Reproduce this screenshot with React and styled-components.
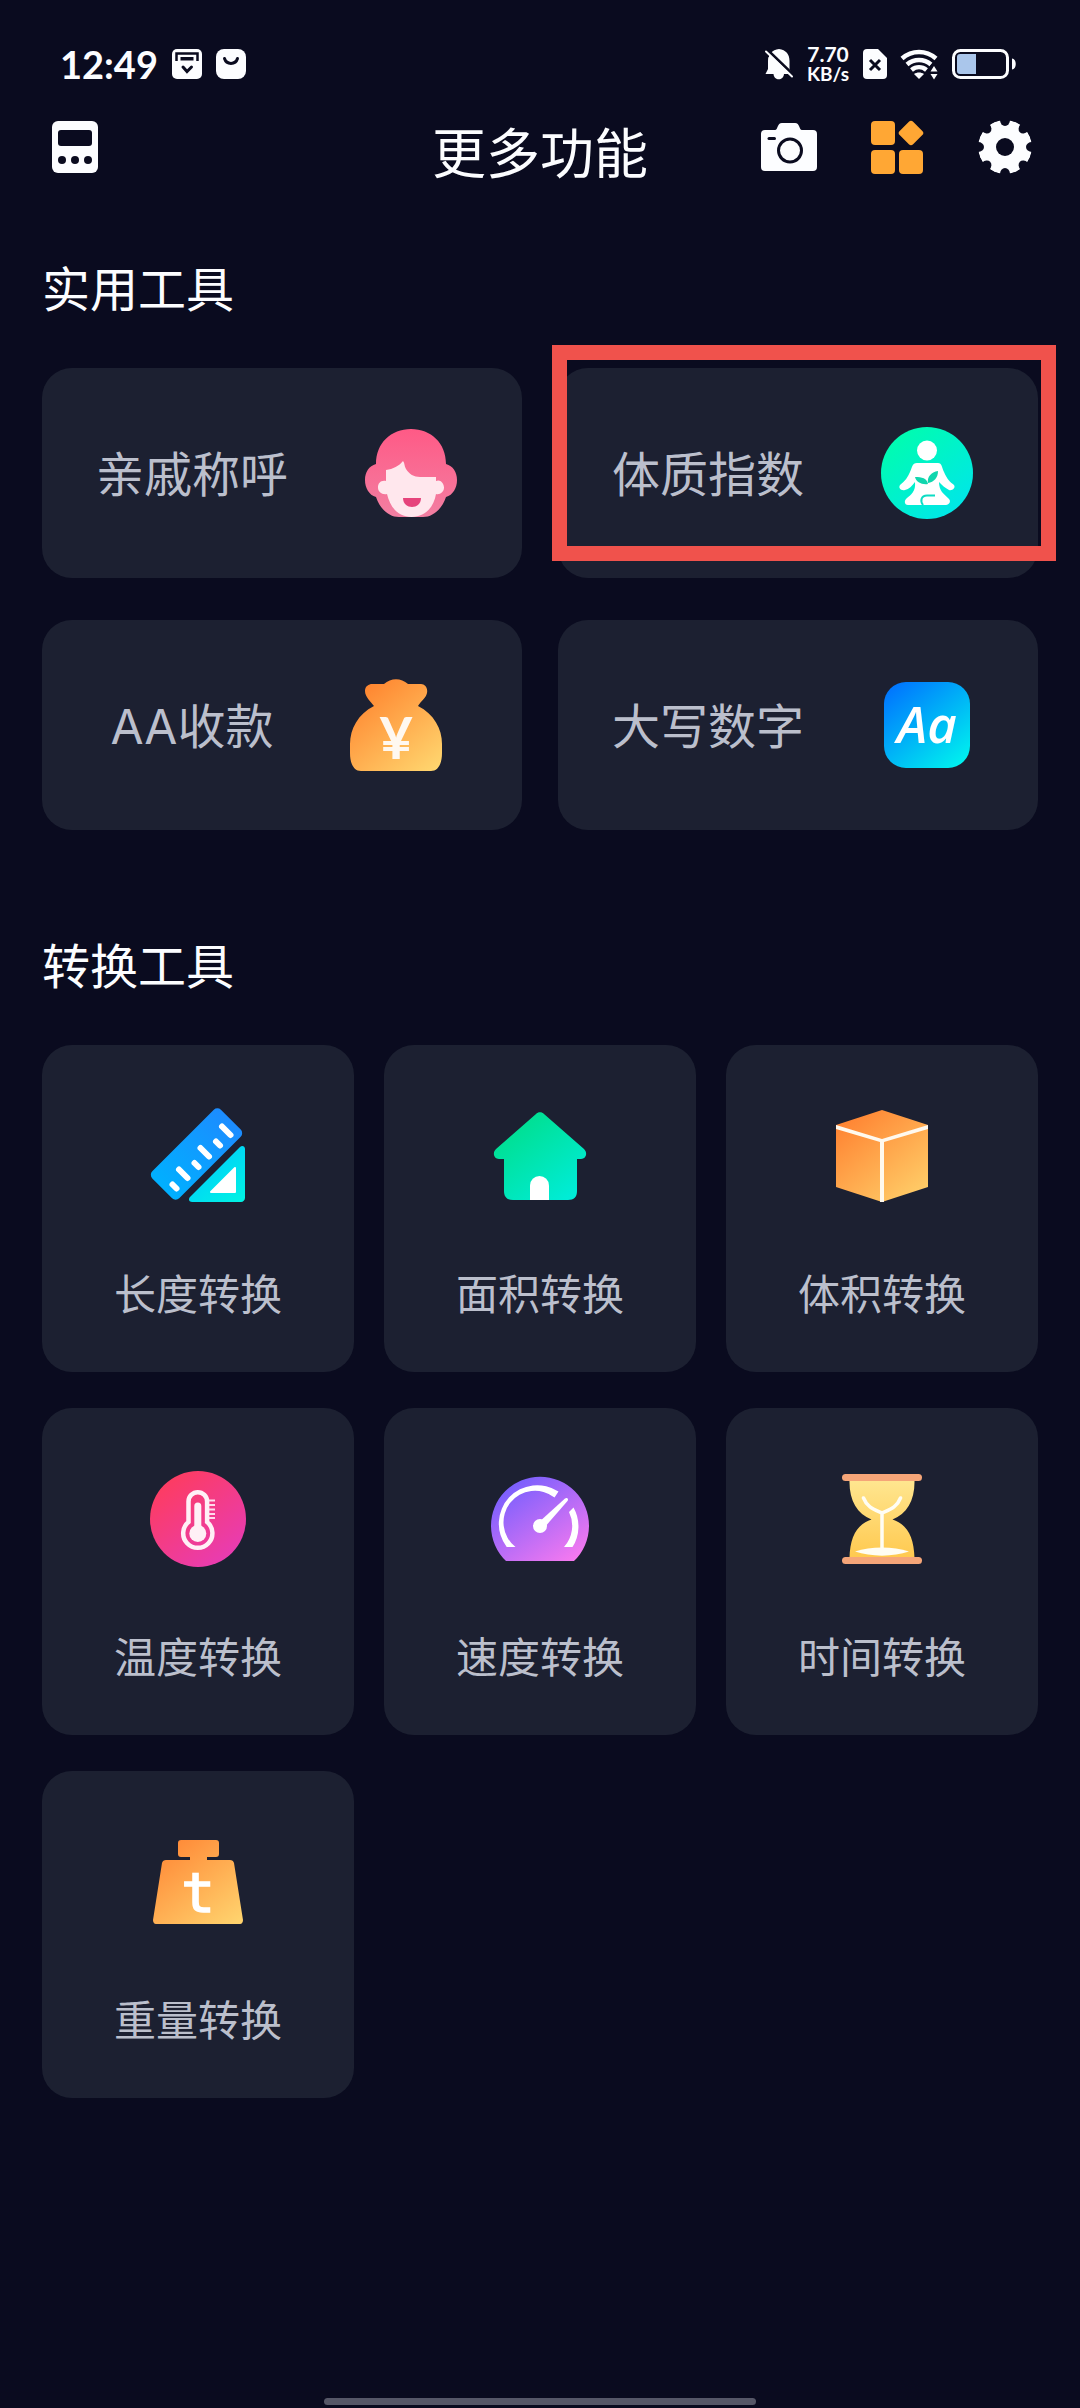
import React from "react";
import styled, { createGlobalStyle, css } from "styled-components";

const colors = {
  page: "#0a0b1f",
  card: "#1c2031",
  label: "#bbbfcc",
  white: "#fcfdff",
  orange: "#ffa734",
  frame: "#f0524c",
};

const GlobalStyle = createGlobalStyle`
  * {
    box-sizing: border-box;
  }

  body {
    margin: 0;
    background: ${colors.page};
    color: ${colors.white};
    font-family: Roboto, "Noto Sans CJK SC", sans-serif;
  }

  button {
    margin: 0;
    padding: 0;
    border: 0;
    background: none;
    color: inherit;
    font: inherit;
    cursor: pointer;
  }

  svg {
    display: block;
    flex: none;
    overflow: visible;
  }
`;

const Page = styled.div`
  display: flex;
  flex-direction: column;
  min-height: 100vh;
`;

const StatusBar = styled.div`
  display: flex;
  align-items: center;
  justify-content: space-between;
  height: 96px;
  padding: 32px 64px 0 60px;
`;

const StatusGroup = styled.div`
  display: flex;
  align-items: center;
  gap: 14px;
`;

const Clock = styled.span`
  font-family: Lato, sans-serif;
  font-size: 38px;
  font-weight: 700;
  line-height: 40px;
`;

const NetSpeed = styled.div`
  display: flex;
  flex-direction: column;
  align-items: center;
  font-family: Lato, sans-serif;
  font-size: 21px;
  font-weight: 700;
  line-height: 20px;
`;

const NetUnit = styled.span`
  font-size: 19px;
`;

const AppBar = styled.header`
  display: grid;
  grid-template-columns: 1fr auto 1fr;
  align-items: center;
  height: 102px;
  padding: 0 36px;
`;

const Title = styled.h1`
  margin: 0;
  padding-top: 16px;
  font-family: Inter, "Noto Sans CJK SC", sans-serif;
  font-size: 54px;
  font-weight: 400;
  line-height: 64px;
`;

const Actions = styled.nav`
  display: flex;
  justify-content: flex-end;
  gap: 30px;
`;

const IconButton = styled.button`
  display: flex;
  align-items: center;
  justify-content: center;
  width: 78px;
  height: 78px;
`;

const Main = styled.main`
  display: flex;
  flex-direction: column;
  gap: 110px;
  padding: 65px 42px 48px;
`;

const SectionTitle = styled.h2`
  margin: 0 0 49px;
  font-size: 48px;
  font-weight: 400;
  line-height: 56px;
`;

const ToolGrid = styled.div`
  display: grid;
  grid-template-columns: repeat(2, 1fr);
  gap: 42px 36px;
`;

const ConvertGrid = styled.div`
  display: grid;
  grid-template-columns: repeat(3, 1fr);
  gap: 36px 30px;
`;

const cardStyles = css`
  display: flex;
  align-items: center;
  border-radius: 30px;
  background: ${colors.card};
  color: ${colors.label};
`;

const ToolCard = styled.button`
  ${cardStyles}
  position: relative;
  justify-content: center;
  gap: 75px;
  height: 210px;
  padding-right: 9px;

  ${({ $framed }) =>
    $framed &&
    css`
      &::after {
        content: "";
        position: absolute;
        top: -23px;
        right: -18px;
        bottom: 17px;
        left: -6px;
        border: 15px solid ${colors.frame};
      }
    `}
`;

const ToolName = styled.span`
  padding-top: 4px;
  font-family: Inter, "Noto Sans CJK SC", sans-serif;
  font-size: 48px;
  line-height: 56px;
`;

const ConvertCard = styled.button`
  ${cardStyles}
  flex-direction: column;
  gap: 68px;
  padding: 63px 0 52px;
  font-size: 42px;
  line-height: 48px;
`;

const HomeBar = styled.footer`
  width: 40%;
  height: 7px;
  margin: auto auto 3px;
  border-radius: 4px;
  background: #565767;
`;

const Gradient = ({ id, from, to, vertical }) => (
  <linearGradient id={id} x1="0.1" y1="0" x2={vertical ? "0.1" : "0.9"} y2="1">
    <stop offset="0" stopColor={from} />
    <stop offset="1" stopColor={to} />
  </linearGradient>
);

const Icon96 = ({ children }) => (
  <svg width="96" height="96" viewBox="0 0 96 96" aria-hidden="true">
    {children}
  </svg>
);

/* status bar icons */

const InboxIcon = () => (
  <svg width="30" height="30" viewBox="0 0 30 30">
    <rect width="30" height="30" rx="5" fill={colors.white} />
    <path
      d="M4.5 12V4.5H25.5V12"
      fill="none"
      stroke={colors.page}
      strokeWidth="2.5"
    />
    <rect x="8.5" y="8" width="13" height="3.5" fill={colors.page} />
    <path
      d="M11 18l4 4.5 4.5-4.5"
      fill="none"
      stroke={colors.page}
      strokeWidth="3"
      strokeLinecap="round"
    />
  </svg>
);

const ShopIcon = () => (
  <svg width="30" height="30" viewBox="0 0 30 30">
    <rect width="30" height="30" rx="8" fill={colors.white} />
    <path
      d="M8.500 9.500c2 6.500 11 6.500 13 0"
      fill="none"
      stroke={colors.page}
      strokeWidth="3"
      strokeLinecap="round"
    />
  </svg>
);

const MutedIcon = () => (
  <svg width="28" height="32" viewBox="0 0 28 32">
    <path
      d="M14 1C7 2 3 6 3 13V21L0.5 26H8.5C9 33 18.500 33 19 26H27L24.5 21V13C24.5 6 21 2 14 1Z"
      fill={colors.white}
    />
    <path d="M2 1.5L28.500 27" stroke={colors.page} strokeWidth="3" />
    <path
      d="M1 3.5L27 28.5"
      stroke={colors.white}
      strokeWidth="2"
      strokeLinecap="round"
    />
    <path d="M-1 4L4 9" stroke={colors.page} strokeWidth="1" />
  </svg>
);

const SimIcon = () => (
  <svg width="24" height="30" viewBox="0 0 24 30">
    <path
      d="M4 0H15L24 9V26a4 4 0 0 1-4 4H4a4 4 0 0 1-4-4V4a4 4 0 0 1 4-4Z"
      fill={colors.white}
    />
    <path d="M7 11l10 10M17 11L7 21" stroke={colors.page} strokeWidth="3" />
  </svg>
);

const WifiIcon = () => (
  <svg width="37" height="30" viewBox="0 0 37 30">
    <g fill="none" stroke={colors.white} strokeWidth="4.5">
      <path d="M1 9.5C11 0.8 25 0.8 35 9.5" />
      <path d="M6 15.5C13 9.5 23 9.5 30 15.5" />
      <path d="M10.5 21C15 17.3 21 17.3 25.5 21" />
    </g>
    <path d="M13 25C16 23 20 23 23 25L18 30Z" fill={colors.white} />
    <path d="M33 12L40 22V31H29V17Z" fill={colors.page} />
    <path d="M33 17l3.5 5.5h-7ZM33 30.5l3.5-5.5h-7Z" fill={colors.white} />
  </svg>
);

const BatteryIcon = () => (
  <svg width="64" height="30" viewBox="0 0 64 30">
    <rect
      x="1.5"
      y="1.5"
      width="54"
      height="27"
      rx="7"
      fill="none"
      stroke={colors.white}
      strokeWidth="3"
    />
    <path d="M8 5H24V25H8a3 3 0 0 1-3-3V8a3 3 0 0 1 3-3Z" fill="#aac6eb" />
    <path d="M60 9.5C65 10 65 20 60 20.5Z" fill={colors.white} />
  </svg>
);

/* app bar icons */

const CalculatorIcon = () => (
  <svg width="46" height="52" viewBox="0 0 46 52">
    <rect width="46" height="52" rx="6" fill={colors.white} />
    <rect x="6" y="9" width="34" height="16" rx="3" fill={colors.page} />
    <circle cx="10" cy="39" r="4" fill={colors.page} />
    <circle cx="23" cy="39" r="4" fill={colors.page} />
    <circle cx="36" cy="39" r="4" fill={colors.page} />
  </svg>
);

const CameraIcon = () => (
  <svg width="56" height="48" viewBox="0 0 56 48">
    <path
      d="M4 7H14C17 7 16 0 21 0H34C39 0 38 7 41 7H52a4 4 0 0 1 4 4V44a4 4 0 0 1-4 4H4a4 4 0 0 1-4-4V11a4 4 0 0 1 4-4Z"
      fill={colors.white}
    />
    <circle
      cx="29"
      cy="27.5"
      r="11.5"
      fill="none"
      stroke={colors.page}
      strokeWidth="3"
    />
    <path
      d="M8 15.5H13.5"
      stroke={colors.page}
      strokeWidth="3"
      strokeLinecap="round"
    />
  </svg>
);

const AppsIcon = () => (
  <svg width="52" height="53" viewBox="0 0 52 53" fill={colors.orange}>
    <rect width="24" height="24" rx="4" />
    <rect y="29" width="24" height="24" rx="4" />
    <rect x="28" y="29" width="24" height="24" rx="4" />
    <rect
      x="30.5"
      y="2.5"
      width="19"
      height="19"
      rx="3"
      transform="rotate(45 40 12)"
    />
  </svg>
);

const GearIcon = () => (
  <svg width="54" height="54" viewBox="-27 -27 54 54">
    <mask id="gear">
      <circle r="27" fill="#fff" />
      <circle r="9" fill="#000" />
      {[0, 45, 90, 135, 180, 225, 270, 315].map((angle) => (
        <ellipse
          key={angle}
          cy="-27"
          rx="5"
          ry="6"
          fill="#000"
          transform={`rotate(${angle})`}
        />
      ))}
    </mask>
    <circle r="27" fill={colors.white} mask="url(#gear)" />
  </svg>
);

/* tool icons */

const FamilyIcon = () => (
  <Icon96>
    <Gradient id="hair" from="#ff5a86" to="#f27fa2" vertical />
    <path
      d="M13 39C13 18 28 4 48 4S83 18 83 39C90 41 94 47 94 55C94 63 90 70 83 72C79 84 70 92 60 92H36C26 92 17 84 13 72C6 70 2 63 2 55C2 47 6 41 13 39Z"
      fill="url(#hair)"
    />
    <path
      d="M23 45C30 44 36 41 40 36C42 38 41 41 43 44C46 49 51 52 57 52H73V56C77 54 81 58 81 62.5C81 67 77 70 73 69C71 82 62 92 48.5 92C35 92 27 82 24 69C19 70 15 67 15 62.5C15 58 18 55 23 56Z"
      fill="#ffe7ed"
    />
    <path d="M40 73H58C58 85 40 85 40 73Z" fill="#e6437b" />
  </Icon96>
);

const BodyIcon = () => (
  <Icon96>
    <Gradient id="body" from="#00ffaa" to="#00e4ee" />
    <circle cx="48" cy="48" r="46" fill="url(#body)" />
    <circle cx="48" cy="25.5" r="10" fill="#fff" />
    <path
      d="M38 38H59C63 38 63 43 65 47C68 54 71 57 75 60C77 63 73 66 70 65C66 63 63 60 60 57C60 66 65 69 69 73C73 76 70 80 67 80H29C25 80 25 75 28 73C32 70 37 66 36 57C33 61 30 64 26 65C22 66 19 63 21 60C26 56 29 52 31 47C33 43 33 38 38 38Z"
      fill="#fff"
    />
    <path
      d="M49 59C43 60 37 57 36 52C43 52 48 53 49 59ZM49 58C48 52 52 47 59 46C59 53 55 57 49 58Z"
      fill="#10d6ae"
    />
    <path
      d="M56 70.5H48C42 70.5 41 76 44 80"
      fill="none"
      stroke="#0cdcc4"
      strokeWidth="2"
    />
  </Icon96>
);

const MoneyIcon = () => (
  <Icon96>
    <Gradient id="money" from="#ff7f2b" to="#ffd56e" />
    <path
      d="M26 29C23 25 17 20 17 14C17 9 21 7 24 7H36C43 0.5 53 0.5 60 7H73C77 7 80 11 79 16C78 21 73 24 70 29C86 37 94 52 94 67V76C94 87 90 94 83 94H13C6 94 2 87 2 76V67C2 52 10 37 26 29Z"
      fill="url(#money)"
    />
    <text
      x="48"
      y="82"
      textAnchor="middle"
      fontFamily="Lato"
      fontWeight="700"
      fontSize="58"
      fill="#fff8f0"
    >
      ¥
    </text>
  </Icon96>
);

const CapitalIcon = () => (
  <Icon96>
    <Gradient id="capital" from="#0072ff" to="#00f4ee" />
    <rect x="5" y="5" width="86" height="86" rx="22" fill="url(#capital)" />
    <text
      x="48"
      y="66"
      textAnchor="middle"
      fontFamily="Open Sans"
      fontStyle="italic"
      fontWeight="600"
      fontSize="51"
      fill="#fff"
    >
      Aa
    </text>
  </Icon96>
);

const LengthIcon = () => (
  <Icon96>
    <Gradient id="triangle" from="#00c6ff" to="#00f2e4" />
    <linearGradient id="ruler" x1="1" y1="0" x2="0" y2="0">
      <stop offset="0" stopColor="#1c8cff" />
      <stop offset="1" stopColor="#00b0ff" />
    </linearGradient>
    <rect
      x="-2"
      y="27"
      width="97"
      height="38"
      rx="5"
      transform="rotate(-45 46.5 46)"
      fill="url(#ruler)"
    />
    <path
      d="M22.5 76.5l4 4M29 61.5l8.5 8.5M44.5 55l4 4M50.5 40l8.5 8.5M66 33.5l4 4M72 18.5l8.5 8.5"
      stroke="#fff"
      strokeWidth="6"
      strokeLinecap="round"
    />
    <path
      d="M90 39C92 37 95 38 95 41V90C95 92 93 94 91 94H42C39 94 38 91 40 89Z"
      fill="url(#triangle)"
    />
    <path
      d="M85 60V84H61Z"
      fill="#fff"
      stroke="#fff"
      strokeWidth="2"
      strokeLinejoin="round"
    />
  </Icon96>
);

const AreaIcon = () => (
  <Icon96>
    <Gradient id="area" from="#00dd84" to="#00eddc" />
    <path
      d="M44 6C46 3.5 50 3.5 52 6L92 41C96 45 94 51 89 51H85V83C85 89 82 92 76 92H21C15 92 12 89 12 83V51H7C2 51 0 45 4 41Z"
      fill="url(#area)"
    />
    <path d="M38 92V77.5a9.5 9.5 0 0 1 19 0V92Z" fill="#fff" />
  </Icon96>
);

const VolumeIcon = () => (
  <Icon96>
    <Gradient id="volume" from="#ff7f2f" to="#ffd06a" />
    <path d="M48 2L94 17V79L48 94L2 79V17Z" fill="url(#volume)" />
    <path
      d="M2 17V21L46 34V94H50V34L94 21V17L48 31Z"
      fill="#fff9ee"
    />
  </Icon96>
);

const TemperatureIcon = () => (
  <Icon96>
    <Gradient id="temperature" from="#ff3c58" to="#e63cbb" />
    <circle cx="48" cy="48" r="48" fill="url(#temperature)" />
    <path
      d="M38.5 51V30.5a9.3 9.3 0 0 1 18.6 0V51A14.6 14.6 0 1 1 38.5 51Z"
      fill="none"
      stroke="#fff0f6"
      strokeWidth="4.5"
    />
    <path
      d="M47.8 35V62"
      stroke="#fff0f6"
      strokeWidth="7"
      strokeLinecap="round"
    />
    <circle cx="47.8" cy="62.5" r="8.5" fill="#fff0f6" />
    <path
      d="M59 29.5h6M59 34h6M59 38.5h6M59 43h6M59 47h6"
      stroke="#ffdcec"
      strokeWidth="2"
    />
  </Icon96>
);

const SpeedIcon = () => (
  <Icon96>
    <Gradient id="speed" from="#6a5cff" to="#fa7aef" />
    <path d="M14 90A49 49 0 1 1 82 90Z" fill="url(#speed)" />
    <path
      d="M14.7 76A38.5 38.5 0 0 1 66.5 20.5L62.5 26.5A31.5 31.5 0 0 0 23.5 76Z"
      fill="#fff"
    />
    <path
      d="M81.5 36.5A38.5 38.5 0 0 1 80.5 76H72A31.5 31.5 0 0 0 77 41Z"
      fill="#fff"
    />
    <circle cx="48" cy="55" r="7" fill="#fff" />
    <path d="M46 52L73 27.5C75 26 77 28 75.5 30L52 57Z" fill="#fff" />
  </Icon96>
);

const TimeIcon = () => (
  <Icon96>
    <Gradient id="time" from="#ffe690" to="#ffc94f" vertical />
    <path
      d="M15.5 9H80.5C81 29 73 43 58.5 48.5C73 53 80 66 80.5 87H15.5C16 66 23 53 37.5 48.5C23 43 15 29 15.5 9Z"
      fill="url(#time)"
    />
    <rect x="8" y="3" width="80" height="7" rx="3.5" fill="#f5a578" />
    <rect x="8" y="86" width="80" height="7" rx="3.5" fill="#f5a578" />
    <path
      d="M29.5 27C33 36 39 38 48 42C57 38 63 36 66.5 27M48 42V79"
      fill="none"
      stroke="#fffdf4"
      strokeWidth="3.5"
      strokeLinecap="round"
    />
    <path d="M21 80.5C37 75 59 75 75 80.5C59 86 37 86 21 80.5Z" fill="#fffdf4" />
  </Icon96>
);

const WeightIcon = () => (
  <Icon96>
    <Gradient id="weight" from="#ff8534" to="#ffd26d" />
    <path
      d="M31 6H66C68 6 69 7 69 9V20C69 22 68 23 66 23H57V26H80C82 26 83.5 27 84 29L93 86C93 88 92 90 90 90H6C4 90 3 88 3 86L12 29C12.5 27 14 26 16 26H40V23H31C29 23 28 22 28 20V9C28 7 29 6 31 6Z"
      fill="url(#weight)"
    />
    <text
      x="48"
      y="78"
      textAnchor="middle"
      fontFamily="DejaVu Sans Mono"
      fontSize="56"
      fill="#fff"
      stroke="#fff"
      strokeWidth="1.5"
    >
      t
    </text>
  </Icon96>
);

const tools = [
  { name: "亲戚称呼", icon: <FamilyIcon /> },
  { name: "体质指数", icon: <BodyIcon />, framed: true },
  { name: "AA收款", icon: <MoneyIcon /> },
  { name: "大写数字", icon: <CapitalIcon /> },
];

const converters = [
  { name: "长度转换", icon: <LengthIcon /> },
  { name: "面积转换", icon: <AreaIcon /> },
  { name: "体积转换", icon: <VolumeIcon /> },
  { name: "温度转换", icon: <TemperatureIcon /> },
  { name: "速度转换", icon: <SpeedIcon /> },
  { name: "时间转换", icon: <TimeIcon /> },
  { name: "重量转换", icon: <WeightIcon /> },
];

const App = () => {
  return (
    <Page lang="zh-CN">
      <GlobalStyle />
      <StatusBar>
        <StatusGroup>
          <Clock>12:49</Clock>
          <InboxIcon />
          <ShopIcon />
        </StatusGroup>
        <StatusGroup>
          <MutedIcon />
          <NetSpeed>
            <span>7.70</span>
            <NetUnit>KB/s</NetUnit>
          </NetSpeed>
          <SimIcon />
          <WifiIcon />
          <BatteryIcon />
        </StatusGroup>
      </StatusBar>

      <AppBar>
        <IconButton type="button" aria-label="计算器">
          <CalculatorIcon />
        </IconButton>
        <Title>更多功能</Title>
        <Actions>
          <IconButton type="button" aria-label="相机">
            <CameraIcon />
          </IconButton>
          <IconButton type="button" aria-label="更多功能">
            <AppsIcon />
          </IconButton>
          <IconButton type="button" aria-label="设置">
            <GearIcon />
          </IconButton>
        </Actions>
      </AppBar>

      <Main>
        <section>
          <SectionTitle>实用工具</SectionTitle>
          <ToolGrid>
            {tools.map(({ name, icon, framed }) => (
              <ToolCard key={name} type="button" $framed={framed}>
                <ToolName>{name}</ToolName>
                {icon}
              </ToolCard>
            ))}
          </ToolGrid>
        </section>

        <section>
          <SectionTitle>转换工具</SectionTitle>
          <ConvertGrid>
            {converters.map(({ name, icon }) => (
              <ConvertCard key={name} type="button">
                {icon}
                {name}
              </ConvertCard>
            ))}
          </ConvertGrid>
        </section>
      </Main>

      <HomeBar />
    </Page>
  );
};

export default App;
